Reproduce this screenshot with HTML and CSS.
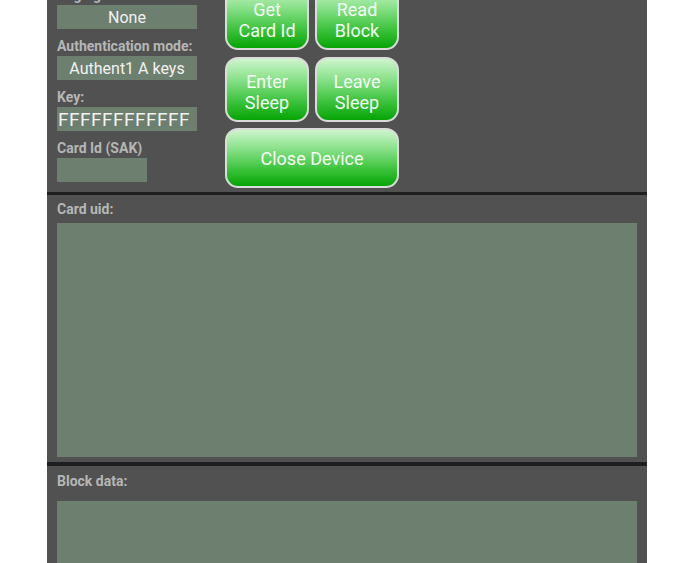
FILE: index.html
```html
<!DOCTYPE html>
<html lang="en">
<head>
  <meta charset="UTF-8">
  <meta name="viewport" content="width=device-width, initial-scale=1.0">
  <title>Reader Demo</title>
  <link rel="stylesheet" href="styles.css">
</head>
<body>
  <div class="panel">
    <!-- settings + actions -->
    <div class="top">
      <div class="fields">
        <div class="label first">Paging:</div>
        <div class="box">None</div>
        <div class="label">Authentication mode:</div>
        <div class="box">Authent1 A keys</div>
        <div class="label">Key:</div>
        <div class="box key">FFFFFFFFFFFF</div>
        <div class="label">Card Id (SAK)</div>
        <div class="box small"></div>
      </div>
      <div class="actions">
        <button class="btn">Get<br>Card Id</button>
        <button class="btn">Read<br>Block</button>
        <button class="btn">Enter<br>Sleep</button>
        <button class="btn">Leave<br>Sleep</button>
        <button class="btn wide">Close Device</button>
      </div>
    </div>

    <div class="divider"></div>

    <div class="section uid">
      <div class="label">Card uid:</div>
      <div class="area tall"></div>
    </div>

    <div class="divider thick"></div>

    <div class="section data">
      <div class="label">Block data:</div>
      <div class="area"></div>
    </div>
  </div>
</body>
</html>
```

FILE: styles.css
```css
body {
  margin: 0;
  background-color: #ffffff;
  font-family: Roboto, 'Noto Sans', sans-serif;
  overflow: hidden;
}

.panel {
  width: 600px;
  margin: -18px auto 0;
  background-color: #515151;
}

.top {
  display: flex;
  gap: 28px;
  padding: 3px 10px 4px;
}

.fields {
  width: 140px;
}

.label {
  color: #b6b6b6;
  font-size: 14px;
  font-weight: bold;
  line-height: 16px;
  margin: 9px 0 2px;
}

.label.first {
  margin-top: 2px;
}

.box {
  height: 24px;
  line-height: 25px;
  background-color: #6d7f6f;
  color: #f2f2f2;
  font-size: 16px;
  text-align: center;
  white-space: nowrap;
  overflow: hidden;
}

.box.key {
  text-align: left;
  padding-left: 1px;
  font-size: 19px;
  letter-spacing: 0.5px;
}

.box.small {
  width: 90px;
}

.actions {
  display: grid;
  grid-template-columns: 84px 84px;
  grid-template-rows: 65px 65px 59px;
  column-gap: 6px;
  row-gap: 7px;
}

.btn {
  font-family: Roboto, 'Noto Sans', sans-serif;
  font-size: 18px;
  line-height: 21px;
  color: #f4fff4;
  border: 2px solid #d9dcd9;
  border-radius: 13px;
  background: linear-gradient(#cdf5cd 0%, #86e086 35%, #3cc23c 70%, #06a406 100%);
  padding: 4px 0 0;
}

.btn.wide {
  grid-column: span 2;
  margin-top: -1px;
  padding-top: 1px;
}

.divider {
  height: 3px;
  background-color: #1c1e1f;
}

.divider.thick {
  height: 4px;
}

.section {
  padding: 0 10px 5px;
}

.uid .label {
  margin: 6px 0 6px;
}

.data .label {
  margin: 7px 0 12px;
}

.area {
  height: 234px;
  background-color: #6d7f6f;
}
```
